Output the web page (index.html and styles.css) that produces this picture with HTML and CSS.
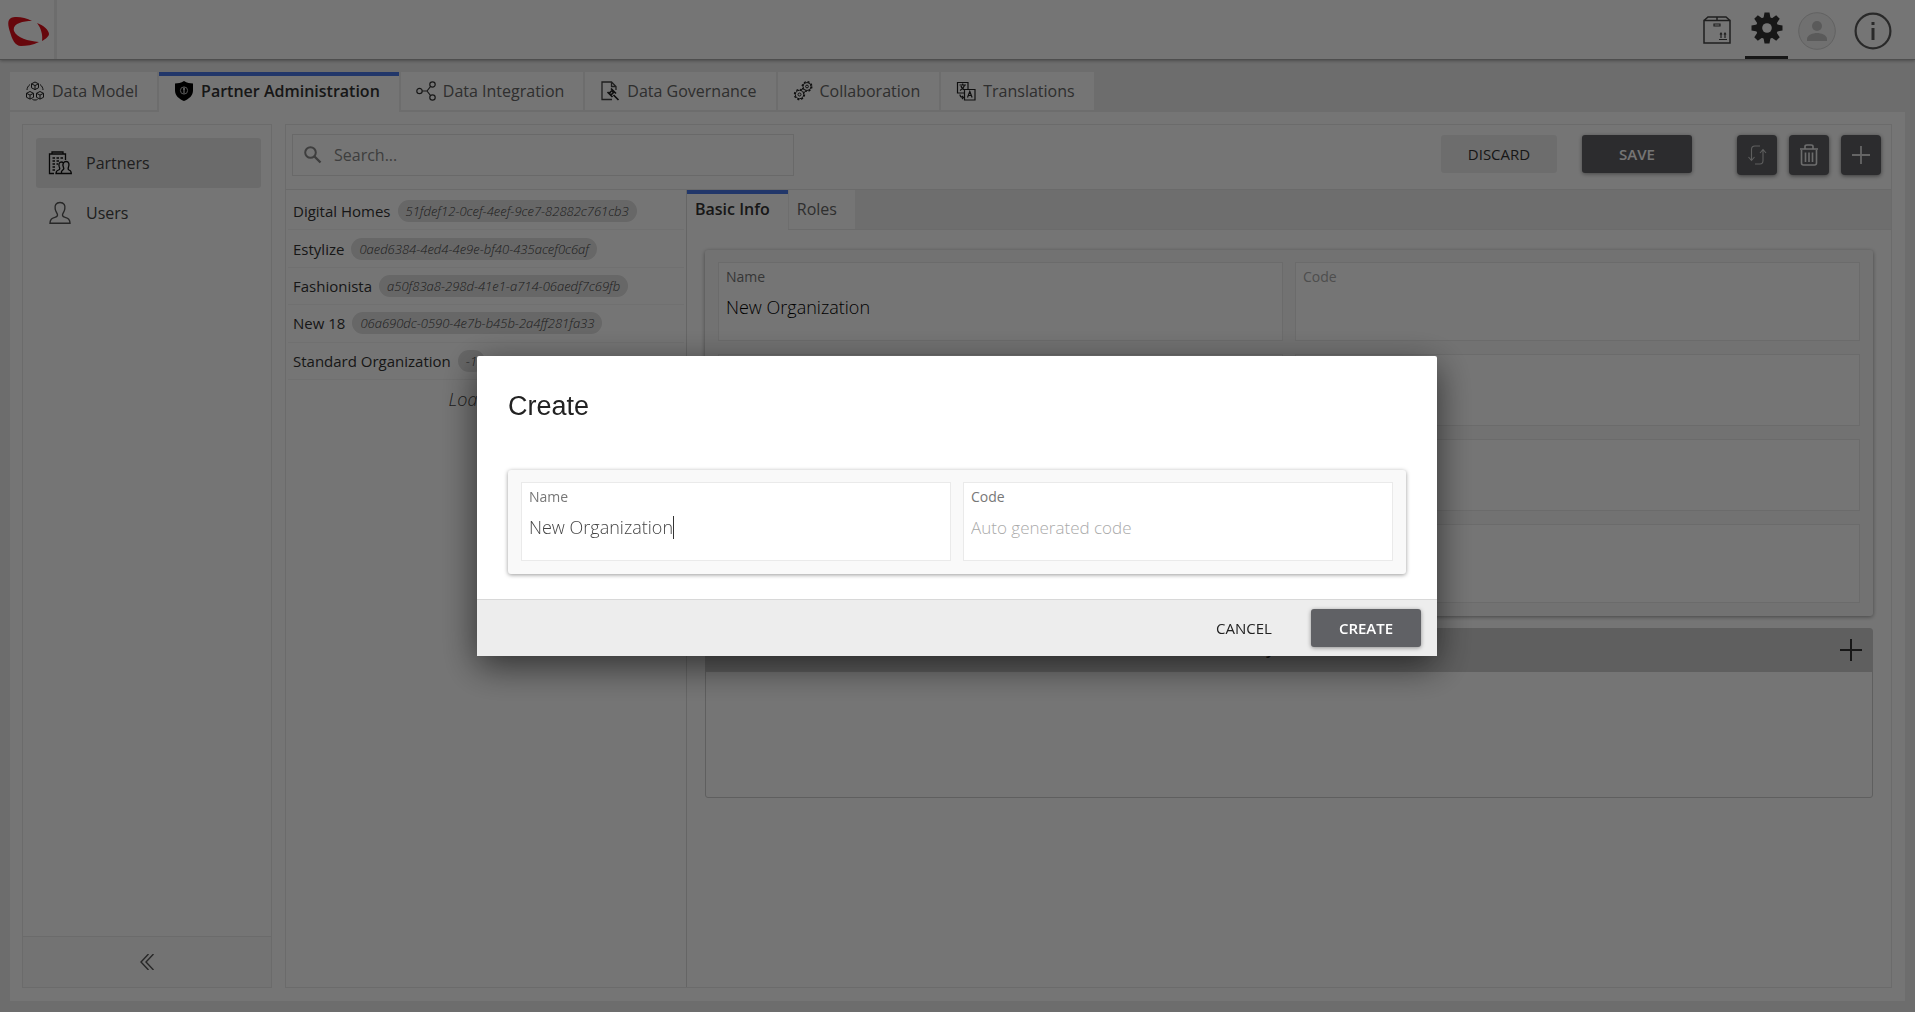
FILE: index.html
```html
<!DOCTYPE html>
<html lang="en">

<head>
    <meta charset="UTF-8">
    <meta name="viewport" content="width=device-width, initial-scale=1.0">
    <title>Partner Administration</title>
    <link rel="stylesheet" href="styles.css">
</head>

<body>
    <header class="header">
        <a class="logo" href="#" aria-label="Home">
            <svg width="42" height="30" viewBox="0 0 42 30">
                <path fill="#e0101c" d="M24 4 C17 0 7 -1 3 1 C-1 3 0 9 2 15 C4 22 7 29 13 29 C18 29 25 28 31 25 C20 24 9 21 6 14 C4 7 14 4 24 4Z" />
                <path fill="#e0101c" d="M29 6 C35 8 41 13 41 17 C41 19 38 22 34 24 C35 18 33 11 29 6Z" />
            </svg>
        </a>
        <nav class="header-actions">
            <button class="header-button catalogs" aria-label="Catalogs">
                <svg width="28" height="28" viewBox="0 0 28 28" fill="none" stroke="#444" stroke-width="1.5">
                    <path d="M1 4.500h26V27H1zM1 4.500L5 1h18l4 3.500M14 1v3.500" />
                    <path d="M11 8h6v2h-6zM16 23.500h8M18 22v-5M22 22v-5M17 18.500l1-1.500 1 1.500M21 18.500l1-1.500 1 1.500" stroke-width="1.200" />
                </svg>
            </button>
            <button class="header-button active" aria-label="Settings">
                <svg width="32" height="32" viewBox="0 0 32 32">
                    <g fill="#333">
                        <circle cx="16" cy="16" r="11" />
                        <path id="tooth" d="M12.500 6l1-5.500h5l1 5.500v20l-1 5.500h-5l-1-5.500z" />
                        <use href="#tooth" transform="rotate(45 16 16)" />
                        <use href="#tooth" transform="rotate(90 16 16)" />
                        <use href="#tooth" transform="rotate(135 16 16)" />
                    </g>
                    <circle cx="16" cy="16" r="4.800" fill="#fff" />
                </svg>
            </button>
            <button class="header-button" aria-label="Profile">
                <svg width="38" height="38" viewBox="0 0 38 38">
                    <circle cx="19" cy="19" r="18.300" fill="#f3f3f3" stroke="#d4d4d4" />
                    <circle cx="19" cy="14" r="5" fill="#c4c4c4" />
                    <path d="M9 29v-2c0-4 6-6 10-6s10 2 10 6v2z" fill="#c4c4c4" />
                </svg>
            </button>
            <button class="header-button" aria-label="Information">
                <svg width="38" height="38" viewBox="0 0 38 38">
                    <circle cx="19" cy="19" r="17.400" fill="none" stroke="#5a5a5a" stroke-width="2.200" />
                    <path d="M17.500 10h3v3h-3zM17.500 16h3v12h-3z" fill="#5a5a5a" />
                </svg>
            </button>
        </nav>
    </header>

    <main class="page">
        <nav class="tabs">
            <button class="tab">
                <svg width="20" height="20" viewBox="0 0 20 20" fill="none" stroke="#222">
                    <path d="M10 1l3.500 1.800v4L10 8.600 6.500 6.800v-4zM6.500 2.800L10 4.600l3.500-1.800M10 4.600v4M5 10.500l3.500 1.800v4L5 18.100l-3.500-1.800v-4zM1.500 12.300L5 14.100l3.500-1.800M5 14.100v4M15 10.500l3.500 1.800v4L15 18.100l-3.500-1.800v-4zM11.500 12.300l3.500 1.800 3.500-1.800M15 14.100v4" />
                    <path d="M5 3.500C3 5 2 7 2 9M15 3.500c2 1.500 3 3.500 3 5.500M7.500 18.500c1.500.7 3.500.7 5 0" />
                </svg>
                Data Model
            </button>
            <button class="tab active">
                <svg width="20" height="20" viewBox="0 0 20 20">
                    <path d="M10 0c3 1.800 6 2.500 9 2.500v7c0 5-4 8.500-9 10.500-5-2-9-5.500-9-10.500v-7C4 2.500 7 1.800 10 0z" />
                    <circle cx="10" cy="9.500" r="3.600" fill="none" stroke="#bbb" />
                    <path d="M10 6.500v6M9 8h2" stroke="#fff" />
                </svg>
                Partner Administration
            </button>
            <button class="tab">
                <svg width="20" height="20" viewBox="0 0 20 20" fill="none" stroke="#333" stroke-width="1.200">
                    <circle cx="3.500" cy="10" r="2.700" />
                    <circle cx="16.500" cy="3.500" r="2.700" />
                    <circle cx="16.500" cy="16.500" r="2.700" />
                    <path d="M6.200 10H11l3.500-4.500M11 10l3.500 4.500" />
                </svg>
                Data Integration
            </button>
            <button class="tab">
                <svg width="20" height="20" viewBox="0 0 20 20" fill="none" stroke="#444" stroke-width="1.300">
                    <path d="M12 18.500H2V1h9.500L16 5.500V9M11.500 1v4.500H16" />
                    <path d="M11 7.500l5 5M7.500 11l5 5M12 9.500l-3 3 2 1.500 2.500-2.500zM13.500 14l5 5" stroke="#222" stroke-width="1.700" />
                </svg>
                Data Governance
            </button>
            <button class="tab">
                <svg width="20" height="20" viewBox="0 0 20 20" fill="none" stroke="#222">
                    <circle cx="6.500" cy="13.500" r="5" stroke-width="1.400" stroke-dasharray="2 1.930" />
                    <circle cx="6.500" cy="13.500" r="4.200" />
                    <circle cx="6.500" cy="13.500" r="1.500" />
                    <circle cx="14" cy="5.500" r="4.800" stroke-width="1.400" stroke-dasharray="2 1.770" />
                    <circle cx="14" cy="5.500" r="4" />
                    <circle cx="14" cy="5.500" r="1.400" />
                </svg>
                Collaboration
            </button>
            <button class="tab">
                <svg width="20" height="20" viewBox="0 0 20 20" fill="none" stroke="#222" stroke-width="1.200">
                    <path d="M8 12H1.500V1.500H12V8M8.500 8.500h10.500V19H8.500zM3.500 4h6.500M6.700 2.500V4M8.500 4c-.5 2.500-2 4-4.500 5.500M5 5c.5 2 2 3.500 4 4" />
                    <path d="M11.500 16.500l2.300-6 2.300 6M12.300 14.500h3M4 13.500c0 2 1.500 3 3.500 3M6 15l1.500 1.500L6 18" />
                </svg>
                Translations
            </button>
        </nav>

        <div class="workspace">
            <aside class="sidebar">
                <nav class="menu">
                    <button class="menu-item active">
                        <svg width="24" height="24" viewBox="0 0 24 24" fill="none" stroke="#111" stroke-width="1.300">
                            <path d="M6 22.500H1.500V3H4V1h11v2h2.500v6M4 3h11" />
                            <path d="M4.500 7h2.500M8.500 7h2.500M12.500 7H15M4.500 10h2.500M8.500 10h2.500M4.500 13h2.500M8.500 13h1.500M4.500 16h2.500M4.500 19h2.500" />
                            <path fill="#e9e9e9" d="M18 10.500c3 0 3.500 3 2.500 5.500-.6 1.500-.6 2.500.5 3 1.500.5 2.300 1.200 2.300 3.500H8c0-2.200 1-3 2.500-3.500 1.500-.6 1.500-1.500.8-3-.9-2.500-.3-5 2.200-5 1 0 1.500.5 2 1 .5-1 1.300-1.500 2.500-1.500z" />
                            <path d="M15.500 12c-1.500 2 0 4 .3 5.500.2 1.300-1.800 1.500-2.300 3v2" />
                        </svg>
                        Partners
                    </button>
                    <button class="menu-item">
                        <svg width="24" height="24" viewBox="0 0 24 24" fill="none" stroke="#555" stroke-width="1.400">
                            <path d="M12 1.500c4 0 5.500 3 4.800 6.500-.3 2-1.300 3.500-2 4.800-.8 1.700 0 2.700 1.800 3.400 3.500 1.200 5.400 1.600 5.400 6.100H2c0-4.500 1.900-4.900 5.400-6.100 1.800-.7 2.600-1.700 1.800-3.400-.7-1.300-1.700-2.800-2-4.800C6.500 4.500 8 1.500 12 1.500z" />
                        </svg>
                        Users
                    </button>
                </nav>
                <button class="collapse" aria-label="Collapse">
                    <svg width="14" height="16" viewBox="0 0 14 16" fill="none" stroke="#555" stroke-width="1.400">
                        <path d="M8.500 0L1 8l7.500 8M13.500 0L6 8l7.500 8" />
                    </svg>
                </button>
            </aside>

            <section class="content">
                <div class="toolbar">
                    <label class="search">
                        <svg width="18" height="18" viewBox="0 0 18 18" fill="none" stroke="#888" stroke-width="2">
                            <circle cx="6.500" cy="6.500" r="5.300" />
                            <path d="M10.500 10.500l6 6" stroke-width="2.400" />
                        </svg>
                        <input type="text" placeholder="Search..." aria-label="Search">
                    </label>
                    <div class="toolbar-actions">
                        <button class="button discard">DISCARD</button>
                        <button class="button primary">SAVE</button>
                        <div class="icon-buttons">
                            <button class="icon-button" aria-label="Sort">
                                <svg width="20" height="20" viewBox="0 0 20 20" fill="none" stroke="#ccc" stroke-width="1.100">
                                    <path d="M13 1H8C5.500 1 4.500 2 4.500 4.500V15M1.500 12l3 3.500 3-3.500M8 19h5c2 0 3-1 3-3.500V4.500M13 8l3-3.500L19 8" />
                                </svg>
                            </button>
                            <button class="icon-button" aria-label="Delete">
                                <svg width="20" height="22" viewBox="0 0 20 22" fill="none" stroke="#eee" stroke-width="1.600">
                                    <path d="M1 5h18M6 4.500V2.500C6 1 7 1 8 1h4c1 0 2 0 2 1.500v2M2.500 6v13c0 1.500.5 2 2 2h11c1.500 0 2-.5 2-2V6M6.500 8.500v9.500M10 8.500v9.500M13.500 8.500v9.500" />
                                </svg>
                            </button>
                            <button class="icon-button" aria-label="Add">
                                <svg width="20" height="20" viewBox="0 0 20 20" stroke="#ddd" stroke-width="1.800">
                                    <path d="M10 1v18M1 10h18" />
                                </svg>
                            </button>
                        </div>
                    </div>
                </div>

                <div class="split">
                    <div class="list">
                        <ul class="partners">
                            <li>Digital Homes <span class="pill">51fdef12-0cef-4eef-9ce7-82882c761cb3</span></li>
                            <li>Estylize <span class="pill">0aed6384-4ed4-4e9e-bf40-435acef0c6af</span></li>
                            <li>Fashionista <span class="pill">a50f83a8-298d-41e1-a714-06aedf7c69fb</span></li>
                            <li>New 18 <span class="pill">06a690dc-0590-4e7b-b45b-2a4ff281fa33</span></li>
                            <li>Standard Organization <span class="pill">-1</span></li>
                        </ul>
                        <p class="loading">Loading...</p>
                    </div>

                    <div class="detail">
                        <div class="detail-tabs">
                            <button class="detail-tab active">Basic Info</button>
                            <button class="detail-tab">Roles</button>
                        </div>
                        <div class="detail-body">
                            <div class="card">
                                <div class="field">
                                    <label for="name">Name</label>
                                    <input type="text" id="name" value="New Organization">
                                </div>
                                <div class="field disabled">
                                    <label for="code">Code</label>
                                    <input type="text" id="code" disabled>
                                </div>
                                <div class="field short"></div>
                                <div class="field short"></div>
                                <div class="field short"></div>
                                <div class="field short"></div>
                                <div class="field"></div>
                                <div class="field"></div>
                            </div>
                            <div class="systems">
                                <div class="systems-header">
                                    <h2>Systems</h2>
                                    <button class="add-system" aria-label="Add system">
                                        <svg width="22" height="22" viewBox="0 0 22 22" stroke="#333" stroke-width="2">
                                            <path d="M11 0v22M0 11h22" />
                                        </svg>
                                    </button>
                                </div>
                            </div>
                        </div>
                    </div>
                </div>
            </section>
        </div>
    </main>

    <div class="overlay">
        <div class="dialog" role="dialog" aria-labelledby="dialog-title">
            <div class="dialog-body">
                <h1 id="dialog-title">Create</h1>
                <div class="card">
                    <div class="field">
                        <label for="new-name">Name</label>
                        <div class="editing">
                            <input type="text" id="new-name" value="New Organization" autofocus>
                            <span class="caret"></span>
                        </div>
                    </div>
                    <div class="field">
                        <label for="new-code">Code</label>
                        <input type="text" id="new-code" placeholder="Auto generated code">
                    </div>
                </div>
            </div>
            <div class="dialog-footer">
                <button class="button cancel">CANCEL</button>
                <button class="button primary">CREATE</button>
            </div>
        </div>
    </div>
</body>

</html>
```

FILE: styles.css
```css
* {
    box-sizing: border-box;
}

body {
    margin: 0;
    height: 100vh;
    display: flex;
    flex-direction: column;
    background-color: #eeeeee;
    color: #333;
    font-family: "Open Sans", "Noto Sans", sans-serif;
    font-size: 16px;
}

button,
input {
    font-family: inherit;
    font-size: inherit;
    color: inherit;
}

button {
    padding: 0;
    border: none;
    background: none;
    cursor: pointer;
}

svg {
    display: block;
    flex: none;
}

/* Header */
.header {
    position: relative;
    display: flex;
    justify-content: space-between;
    flex: none;
    height: 60px;
    background-color: white;
    border-bottom: 1px solid #aaa;
    box-shadow: 0 1px 3px rgba(0, 0, 0, 0.3);
}

.logo {
    display: flex;
    align-items: center;
    padding: 4px 4px 0 8px;
    border-right: 3px solid #eeeeee;
}

.header-actions {
    display: flex;
    gap: 7px;
    padding-right: 21px;
}

.header-button {
    display: flex;
    align-items: center;
    justify-content: center;
    min-width: 43px;
    padding-top: 2px;
}

.header-button.catalogs {
    padding: 0;
}

.header-button.active {
    padding: 0;
    border-bottom: 3px solid #333;
}

.header-button:last-child {
    margin-left: 6px;
}

/* Main tabs */
.page {
    display: flex;
    flex-direction: column;
    flex: 1;
    min-height: 0;
    padding: 12px 10px 11px;
}

.tabs {
    display: flex;
    gap: 2px;
    height: 40px;
}

.tab {
    display: flex;
    align-items: center;
    gap: 7px;
    height: 38px;
    padding: 0 19px 0 15px;
    background-color: white;
    color: #666;
}

.tab.active {
    height: 40px;
    padding-bottom: 2px;
    box-shadow: inset 0 4px #4a78e8;
    color: #333;
    font-weight: 600;
}

.workspace {
    display: flex;
    flex: 1;
    gap: 13px;
    min-height: 0;
    padding: 12px 13px 13px 12px;
    background-color: white;
}

/* Sidebar */
.sidebar {
    display: flex;
    flex-direction: column;
    width: 250px;
    border: 1px solid #eaeaea;
}

.menu {
    flex: 1;
    padding: 13px 10px 0 13px;
}

.menu-item {
    display: flex;
    align-items: center;
    gap: 14px;
    width: 100%;
    height: 50px;
    padding-left: 12px;
    border-radius: 3px;
    color: #444;
}

.menu-item.active {
    background-color: #e9e9e9;
}

.collapse {
    display: flex;
    align-items: center;
    justify-content: center;
    height: 51px;
    border-top: 1px solid #eaeaea;
    background-color: #fafafa;
}

/* Toolbar */
.content {
    display: flex;
    flex-direction: column;
    flex: 1;
    min-width: 0;
    border: 1px solid #eaeaea;
}

.toolbar {
    display: flex;
    justify-content: space-between;
    height: 65px;
    padding: 9px 10px 0 6px;
    border-bottom: 1px solid #e8e8e8;
}

.search {
    display: flex;
    align-items: center;
    gap: 12px;
    width: 502px;
    height: 42px;
    padding-left: 11px;
    border: 1px solid #e4e4e4;
}

.search input {
    flex: 1;
    padding: 0;
    border: none;
    outline: none;
    background: none;
}

.search input::placeholder {
    color: #888;
}

.toolbar-actions {
    display: flex;
    align-items: flex-start;
    gap: 25px;
    padding-top: 1px;
}

.button {
    height: 38px;
    border-radius: 3px;
    font-size: 15px;
}

.discard {
    width: 116px;
    background-color: #eeeeee;
}

.primary {
    width: 110px;
    background-color: #606165;
    box-shadow: 0 1px 4px rgba(0, 0, 0, 0.4);
    color: white;
    font-weight: 600;
}

.icon-buttons {
    display: flex;
    gap: 12px;
    margin-left: 20px;
}

.icon-button {
    display: flex;
    align-items: center;
    justify-content: center;
    width: 40px;
    height: 40px;
    border-radius: 4px;
    background-color: #606165;
    box-shadow: 0 1px 4px rgba(0, 0, 0, 0.5);
}

/* Partner list */
.split {
    display: flex;
    flex: 1;
    min-height: 0;
}

.list {
    width: 401px;
    padding: 3px 2px 0 2px;
    border-right: 1px solid #ddd;
}

.partners {
    display: grid;
    grid-auto-rows: 1fr;
    height: 187px;
    margin: 0;
    padding: 0;
    list-style: none;
}

.partners li {
    display: flex;
    align-items: center;
    gap: 7px;
    padding-left: 5px;
    border-bottom: 1px solid #f3f3f3;
    font-size: 15px;
}

.pill {
    padding: 0 8px;
    border-radius: 11px;
    background-color: #e0e0e0;
    color: #444;
    font-size: 13px;
    font-style: italic;
    font-weight: 300;
    line-height: 22px;
}

.loading {
    margin: 8px 0;
    color: #444;
    font-size: 18px;
    font-style: italic;
    font-weight: 300;
    line-height: 22px;
    text-align: center;
}

/* Detail */
.detail {
    flex: 1;
    min-width: 0;
}

.detail-tabs {
    display: flex;
    gap: 1px;
    height: 40px;
    background-color: #f0f0f0;
    border-bottom: 1px solid #eaeaea;
}

.detail-tab {
    height: 39px;
    padding: 0 18px 2px 8px;
    background-color: white;
    color: #666;
}

.detail-tab.active {
    height: 40px;
    box-shadow: inset 0 4px #4a78e8;
    color: #333;
    font-weight: 600;
}

.detail-body {
    padding: 20px 18px 0;
}

.card {
    display: grid;
    grid-template-columns: 1fr 1fr;
    gap: 13px 12px;
    padding: 12px 13px 13px;
    border-radius: 3px;
    background-color: #f9f9f9;
    box-shadow: 0 1px 4px rgba(0, 0, 0, 0.4);
}

.field {
    display: flex;
    flex-direction: column;
    height: 79px;
    padding: 4px 7px;
    border: 1px solid #eaeaea;
    background-color: white;
}

.field.short {
    height: 72px;
}

.field label {
    color: #777;
    font-size: 14px;
    line-height: 20px;
}

.field.disabled label {
    color: #aaa;
}

.field input {
    height: 39px;
    padding: 0;
    border: none;
    outline: none;
    background: none;
    color: #000;
    font-size: 18px;
    font-weight: 300;
}

.systems {
    height: 170px;
    margin-top: 12px;
    border: 1px solid #cfcfcf;
    border-radius: 3px;
}

.systems-header {
    display: flex;
    align-items: center;
    height: 43px;
    padding: 0 10px 2px 32px;
    background-color: #cfcfcf;
}

.systems-header h2 {
    flex: 1;
    margin: 0;
    padding-bottom: 4px;
    font-size: 16px;
    font-weight: 600;
    line-height: 20px;
    text-align: center;
}

/* Create dialog */
.overlay {
    position: fixed;
    inset: 0;
    display: flex;
    align-items: center;
    justify-content: center;
    padding-right: 1px;
    background-color: rgba(0, 0, 0, 0.54);
}

.dialog {
    width: 960px;
    background-color: white;
    border-radius: 2px;
    box-shadow: 0 10px 36px rgba(0, 0, 0, 0.6);
}

.dialog-body {
    padding: 32px 31px 25px;
}

.dialog h1 {
    margin: 0 0 46px;
    color: #222;
    font-family: "Liberation Sans", Arial, sans-serif;
    font-size: 27px;
    font-weight: normal;
    line-height: 36px;
}

.editing {
    display: flex;
    align-items: center;
}

.editing input {
    field-sizing: content;
    caret-color: transparent;
}

.caret {
    width: 1px;
    height: 23px;
    background-color: #333;
}

.dialog .field input {
    height: 40px;
    color: #444;
}

.dialog .field input::placeholder {
    color: #aaa;
    font-size: 17px;
}

.dialog-footer {
    display: flex;
    justify-content: flex-end;
    gap: 12px;
    height: 57px;
    padding: 9px 16px;
    border-top: 1px solid #d8d8d8;
    background-color: #ededed;
}

.cancel {
    width: 110px;
    color: #222;
}
```
